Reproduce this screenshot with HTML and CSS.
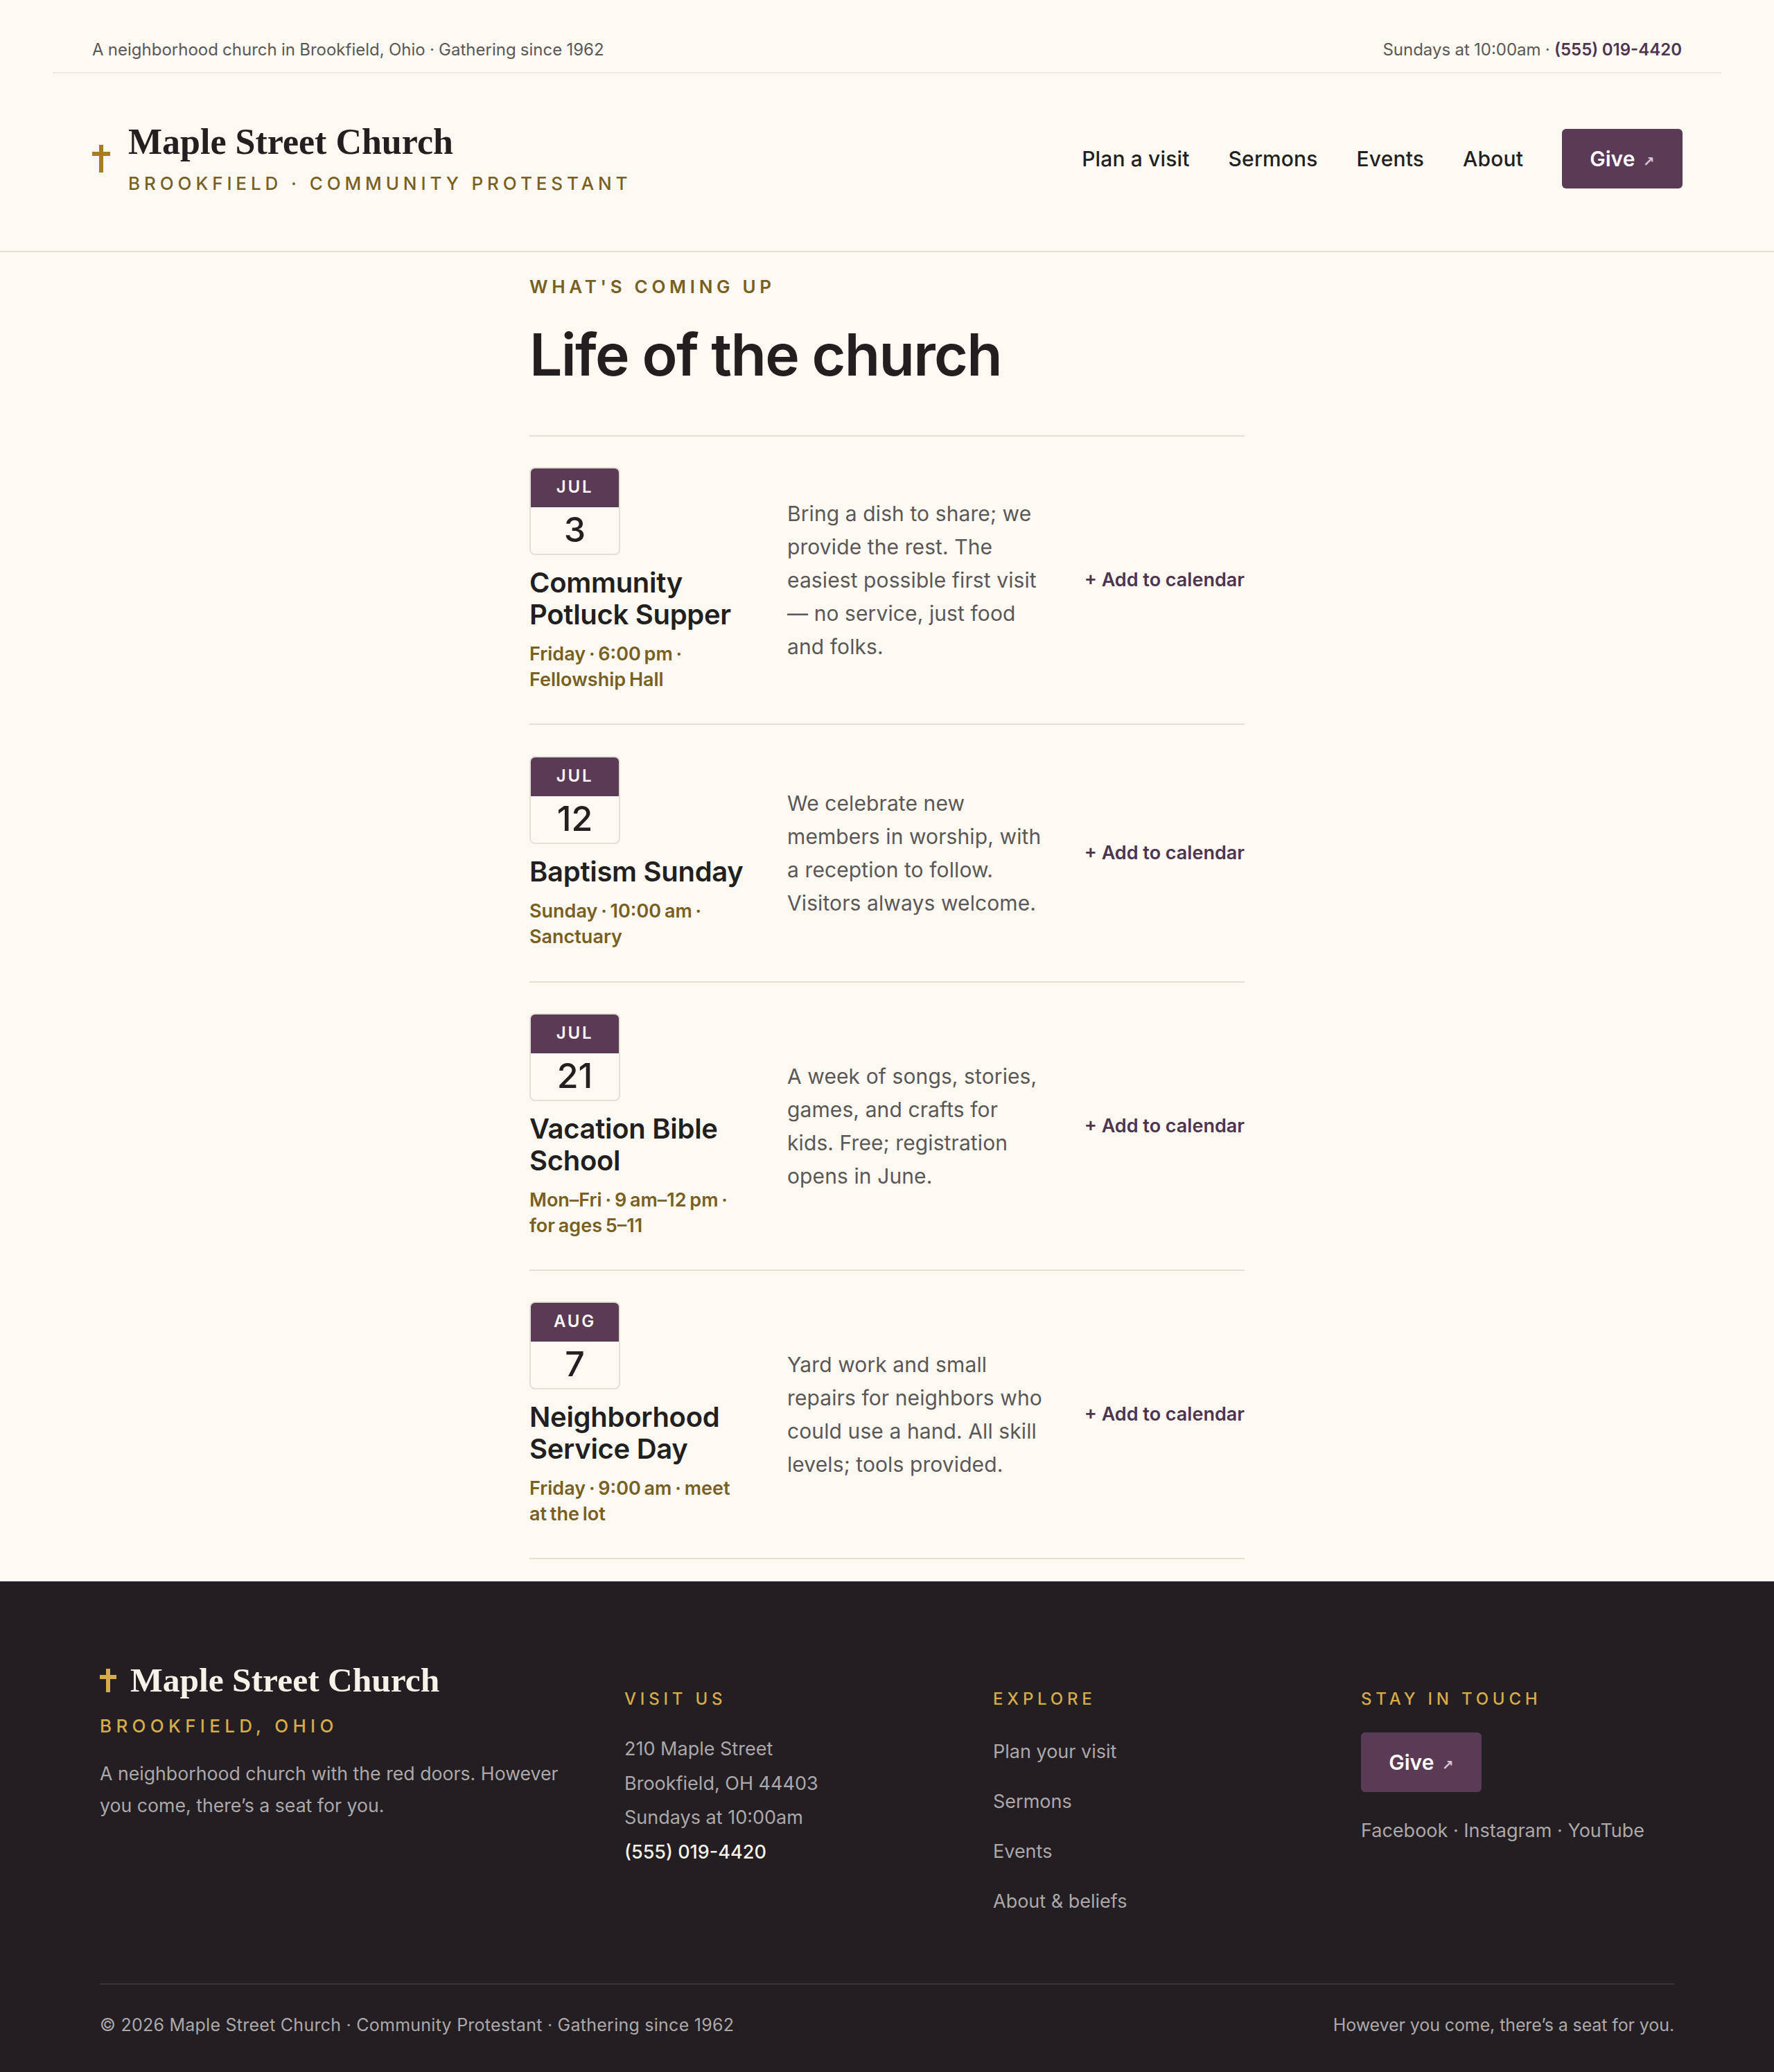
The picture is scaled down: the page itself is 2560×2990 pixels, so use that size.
FILE: index.html
```html
<!DOCTYPE html>
<html lang="en">
<head>
    <meta charset="UTF-8">
    <meta name="viewport" content="width=device-width, initial-scale=1.0">
    <title>Events - Maple Street Church</title>
    <link rel="stylesheet" href="styles.css">
</head>
<body>
    <div class="topbar">
        <span>A neighborhood church in Brookfield, Ohio · Gathering since 1962</span>
        <span>Sundays at 10:00am · <a href="#" class="phone">(555) 019-4420</a></span>
    </div>

    <header class="site-header">
        <a href="#" class="brand">
            <span class="cross">
                <svg viewBox="0 0 26 40" width="26" height="40"><path d="M10 0h6v10h10v6H16v24h-6V16H0v-6h10z"/></svg>
            </span>
            <span class="brand-text">
                <span class="brand-name">Maple Street Church</span>
                <span class="brand-sub">BROOKFIELD · COMMUNITY PROTESTANT</span>
            </span>
        </a>
        <nav class="main-nav">
            <a href="#">Plan a visit</a>
            <a href="#">Sermons</a>
            <a href="#">Events</a>
            <a href="#">About</a>
            <a href="#" class="give-button">Give <span class="arrow">↗</span></a>
        </nav>
    </header>

    <main class="events">
        <p class="eyebrow">WHAT'S COMING UP</p>
        <h1>Life of the church</h1>

        <ul class="event-list">
            <li class="event">
                <div class="event-info">
                    <div class="date-box"><span class="month">JUL</span><span class="day">3</span></div>
                    <h2>Community Potluck Supper</h2>
                    <p class="meta">Friday · 6:00 pm · Fellowship Hall</p>
                </div>
                <p class="desc">Bring a dish to share; we provide the rest. The easiest possible first visit — no service, just food and folks.</p>
                <a href="#" class="add-link">+ Add to calendar</a>
            </li>
            <li class="event">
                <div class="event-info">
                    <div class="date-box"><span class="month">JUL</span><span class="day">12</span></div>
                    <h2>Baptism Sunday</h2>
                    <p class="meta">Sunday · 10:00 am · Sanctuary</p>
                </div>
                <p class="desc">We celebrate new members in worship, with a reception to follow. Visitors always welcome.</p>
                <a href="#" class="add-link">+ Add to calendar</a>
            </li>
            <li class="event">
                <div class="event-info">
                    <div class="date-box"><span class="month">JUL</span><span class="day">21</span></div>
                    <h2>Vacation Bible School</h2>
                    <p class="meta">Mon–Fri · 9 am–12 pm · for ages 5–11</p>
                </div>
                <p class="desc">A week of songs, stories, games, and crafts for kids. Free; registration opens in June.</p>
                <a href="#" class="add-link">+ Add to calendar</a>
            </li>
            <li class="event">
                <div class="event-info">
                    <div class="date-box"><span class="month">AUG</span><span class="day">7</span></div>
                    <h2>Neighborhood Service Day</h2>
                    <p class="meta">Friday · 9:00 am · meet at the lot</p>
                </div>
                <p class="desc">Yard work and small repairs for neighbors who could use a hand. All skill levels; tools provided.</p>
                <a href="#" class="add-link">+ Add to calendar</a>
            </li>
        </ul>
    </main>

    <footer class="site-footer">
        <div class="footer-grid">
            <div class="footer-brand">
                <div class="footer-name">
                    <svg viewBox="0 0 24 34" width="24" height="34"><path d="M9 0h6v9h9v6h-9v19H9V15H0V9h9z"/></svg>
                    <span>Maple Street Church</span>
                </div>
                <p class="footer-place">BROOKFIELD, OHIO</p>
                <p class="footer-about">A neighborhood church with the red doors. However you come, there’s a seat for you.</p>
            </div>
            <div class="footer-col">
                <h3>VISIT US</h3>
                <address>
                    210 Maple Street<br>
                    Brookfield, OH 44403<br>
                    Sundays at 10:00am<br>
                    <a href="#" class="footer-phone">(555) 019-4420</a>
                </address>
            </div>
            <div class="footer-col">
                <h3>EXPLORE</h3>
                <div class="footer-links">
                    <a href="#">Plan your visit</a>
                    <a href="#">Sermons</a>
                    <a href="#">Events</a>
                    <a href="#">About &amp; beliefs</a>
                </div>
            </div>
            <div class="footer-col">
                <h3>STAY IN TOUCH</h3>
                <a href="#" class="give-button footer-give">Give <span class="arrow">↗</span></a>
                <p class="social">Facebook · Instagram · YouTube</p>
            </div>
        </div>
        <div class="footer-bottom">
            <span>© 2026 Maple Street Church · Community Protestant · Gathering since 1962</span>
            <span class="footer-tagline">However you come, there’s a seat for you.</span>
        </div>
    </footer>
</body>
</html>
```

FILE: styles.css
```css
* {
    margin: 0;
    padding: 0;
    box-sizing: border-box;
}

body {
    font-family: 'Inter', 'Liberation Sans', sans-serif;
    background: #fcf9f3;
    color: #231f20;
}

a {
    color: inherit;
    text-decoration: none;
}

ul {
    list-style: none;
}

.topbar {
    margin: 0 76px;
    height: 106px;
    padding: 38px 57px 0;
    border-bottom: 2px solid #ece8df;
    display: flex;
    align-items: center;
    justify-content: space-between;
    font-size: 24px;
    word-spacing: -0.5px;
    color: #5c5757;
}

.phone {
    color: #4f3450;
    font-weight: 600;
}

.site-header {
    height: 258px;
    padding: 0 132px 10px 133px;
    border-bottom: 2px solid #e4e0d6;
    display: flex;
    align-items: center;
    justify-content: space-between;
}

.brand {
    display: flex;
    align-items: center;
    gap: 26px;
}

.cross {
    display: flex;
    fill: #a97c22;
}

.brand-text {
    display: flex;
    flex-direction: column;
    padding-bottom: 5px;
}

.brand-name {
    font-family: 'Liberation Serif', serif;
    font-size: 52px;
    font-weight: 700;
    line-height: 64px;
}

.brand-sub {
    margin-top: 12px;
    font-size: 26px;
    font-weight: 500;
    letter-spacing: 5.900px;
    color: #7a5f22;
}

.main-nav {
    display: flex;
    align-items: center;
    gap: 56px;
    font-size: 30px;
    font-weight: 500;
    letter-spacing: 0.15px;
}

.give-button {
    display: inline-block;
    width: 174px;
    height: 86px;
    line-height: 86px;
    text-align: center;
    background: #5b3a56;
    border-radius: 6px;
    color: #fff;
    font-size: 30px;
    font-weight: 600;
    letter-spacing: 0;
}

.arrow {
    margin-left: 4px;
    font-family: 'DejaVu Sans', sans-serif;
    font-size: 20px;
    color: #d9c3d6;
}

.events {
    width: 1032px;
    margin: 0 auto;
    padding-top: 34px;
}

.eyebrow {
    font-size: 26px;
    font-weight: 600;
    letter-spacing: 5.700px;
    color: #7a5f22;
}

h1 {
    margin-top: 33px;
    font-size: 84px;
    font-weight: 600;
    line-height: 100px;
    letter-spacing: -1.700px;
}

.event-list {
    margin-top: 66px;
    border-top: 2px solid #e4e0d6;
}

.event {
    min-height: 372px;
    padding: 44px 0 45px;
    border-bottom: 2px solid #e4e0d6;
    display: grid;
    grid-template-columns: 326px 1fr auto;
    column-gap: 46px;
    align-items: center;
}

.event-info {
    padding-right: 14px;
}

.date-box {
    width: 131px;
    height: 127px;
    border: 2px solid #e4e0d6;
    border-radius: 8px;
    overflow: hidden;
    display: flex;
    flex-direction: column;
}

.month {
    height: 56px;
    line-height: 54px;
    background: #5b3a56;
    color: #fcf9f3;
    text-align: center;
    font-size: 24px;
    font-weight: 600;
    letter-spacing: 2.800px;
}

.day {
    flex: 1;
    text-align: center;
    font-size: 50px;
    font-weight: 500;
    line-height: 64px;
}

h2 {
    margin-top: 17px;
    font-size: 40px;
    font-weight: 600;
    line-height: 46px;
    letter-spacing: -0.3px;
}

.meta {
    margin-top: 15px;
    font-size: 27px;
    font-weight: 600;
    line-height: 37px;
    word-spacing: -2px;
    color: #7a5f22;
}

.desc {
    max-width: 372px;
    font-size: 30px;
    line-height: 48px;
    letter-spacing: 0.1px;
    color: #5c5757;
}

.add-link {
    font-size: 27px;
    font-weight: 600;
    color: #4f3450;
}

.site-footer {
    margin-top: 32px;
    height: 709px;
    padding: 112px 144px 0;
    background: #231e22;
    color: #aca8aa;
}

.footer-grid {
    display: grid;
    grid-template-columns: 757px 532px 531px 1fr;
    height: 470px;
    border-bottom: 2px solid #3a3539;
}

.footer-brand {
    padding-top: 2px;
}

.footer-name {
    display: flex;
    align-items: center;
    gap: 20px;
    font-family: 'Liberation Serif', serif;
    font-size: 49.500px;
    font-weight: 700;
    color: #f6f2ea;
    fill: #d6ab4a;
}

.footer-place {
    margin-top: 22px;
    font-size: 26px;
    font-weight: 500;
    letter-spacing: 6.300px;
    color: #d6ab4a;
}

.footer-about {
    margin-top: 30px;
    width: 680px;
    font-size: 26.700px;
    line-height: 46px;
}

.footer-col {
    padding-top: 43px;
}

.footer-col h3 {
    font-size: 24px;
    font-weight: 500;
    letter-spacing: 5.800px;
    color: #d6ab4a;
    margin-bottom: 33px;
}

address {
    font-style: normal;
    font-size: 27px;
    line-height: 49.500px;
}

.footer-phone {
    color: #f6f2ea;
    font-weight: 500;
}

.footer-links {
    padding-top: 12px;
    display: flex;
    flex-direction: column;
    gap: 39px;
    font-size: 27px;
}

.footer-give {
    margin-top: 1px;
}

.social {
    margin-top: 39px;
    font-size: 27px;
}

.footer-bottom {
    padding-top: 43px;
    display: flex;
    justify-content: space-between;
    font-size: 25px;
    letter-spacing: 0.250px;
}

.footer-tagline {
    letter-spacing: -0.1px;
}
```
